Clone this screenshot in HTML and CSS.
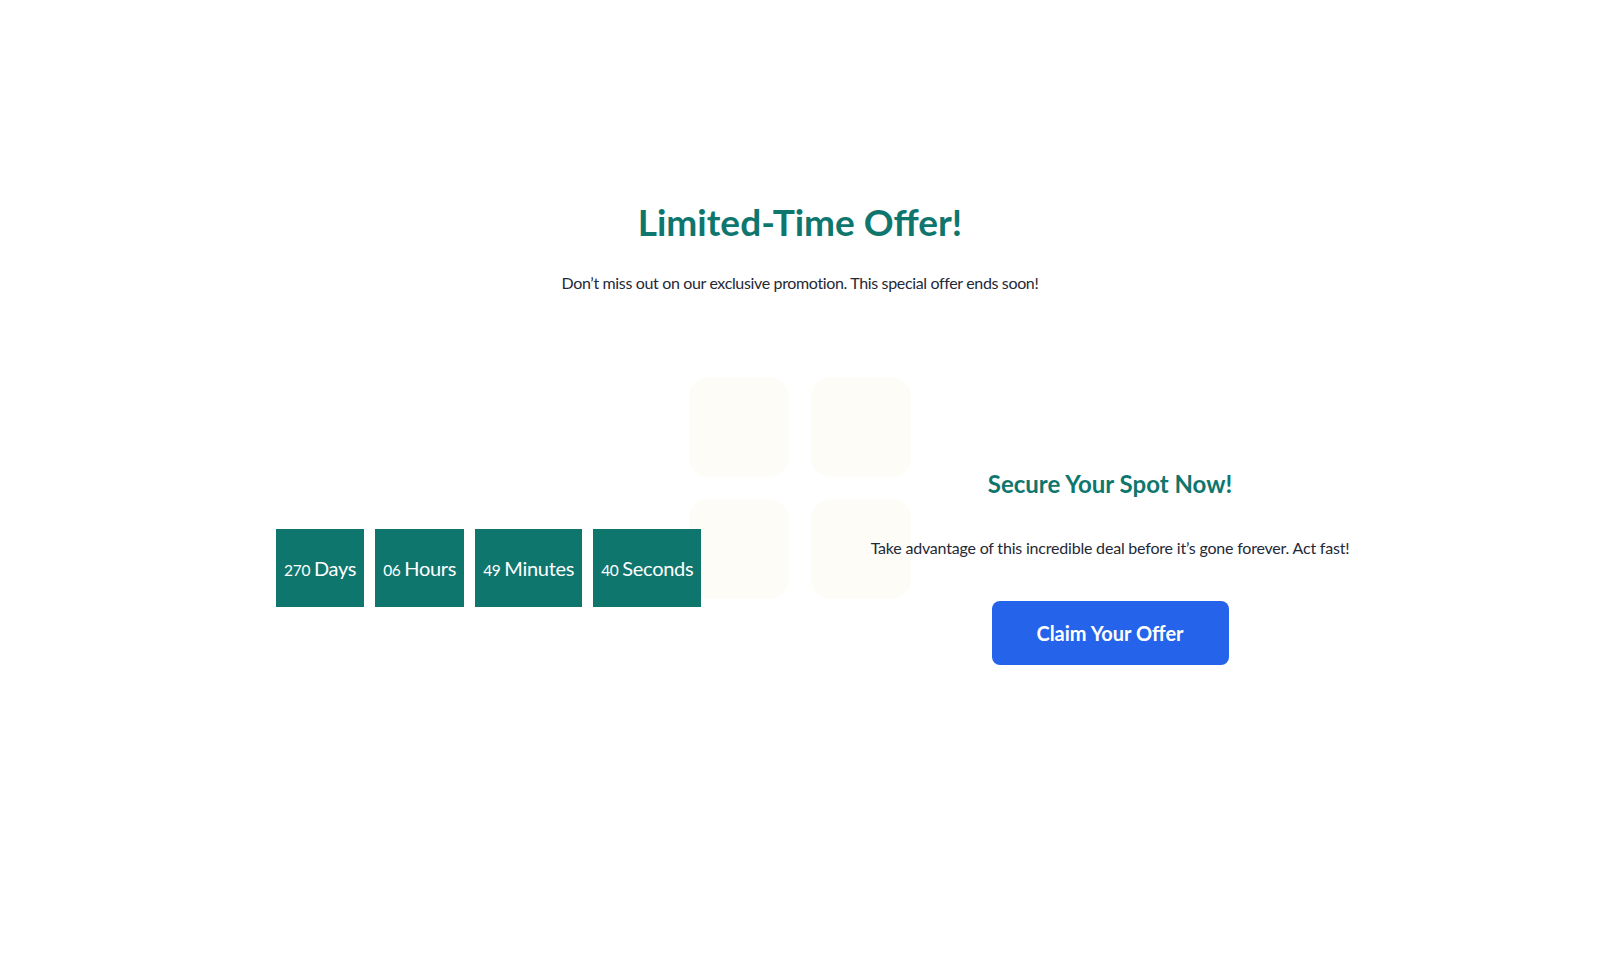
FILE: index.html
```html
<!DOCTYPE html>
<html lang="en">
<head>
<meta charset="utf-8">
<title>Limited-Time Offer</title>
<link rel="stylesheet" href="styles.css">
</head>
<body>
<main class="page">
  <header class="intro">
    <h1 class="intro-title">Limited-Time Offer!</h1>
    <p class="intro-text">Don’t miss out on our exclusive promotion. This special offer ends soon!</p>
  </header>
  <section class="offer">
    <div class="deco" aria-hidden="true">
      <span class="deco-tile"></span>
      <span class="deco-tile"></span>
      <span class="deco-tile"></span>
      <span class="deco-tile"></span>
    </div>
    <div class="offer-row">
      <div class="countdown">
        <div class="cd-box"><span class="cd-time"><span class="cd-num">270</span> <span class="cd-label">Days</span></span></div>
        <div class="cd-box"><span class="cd-time"><span class="cd-num">06</span> <span class="cd-label">Hours</span></span></div>
        <div class="cd-box"><span class="cd-time"><span class="cd-num">49</span> <span class="cd-label">Minutes</span></span></div>
        <div class="cd-box"><span class="cd-time"><span class="cd-num">40</span> <span class="cd-label">Seconds</span></span></div>
      </div>
      <div class="cta">
        <h2 class="cta-title">Secure Your Spot Now!</h2>
        <p class="cta-text">Take advantage of this incredible deal before it’s gone forever. Act fast!</p>
        <button class="cta-button" type="button">Claim Your Offer</button>
      </div>
    </div>
  </section>
</main>
</body>
</html>
```

FILE: styles.css
```css
* { box-sizing: border-box; }

html, body {
  margin: 0;
  padding: 0;
  background: #ffffff;
}

body {
  font-family: "Lato", "Noto Sans", sans-serif;
  color: #1f2937;
}

.page {
  padding-top: 200px;
}

.intro {
  text-align: center;
}

.intro-title {
  margin: 0;
  font-size: 37px;
  line-height: 1.2;
  font-weight: 700;
  color: #0f766e;
}

.intro-text {
  margin: 27px 0 0;
  font-size: 16px;
  line-height: 24px;
  letter-spacing: -0.35px;
  color: #1f2937;
}

.offer {
  position: relative;
  margin-top: 173px;
}

.deco {
  position: absolute;
  top: -91px;
  left: calc(50% - 111px);
  display: grid;
  grid-template-columns: 100px 100px;
  grid-auto-rows: 100px;
  gap: 22px;
  z-index: 0;
}

.deco-tile {
  display: block;
  background: #fdfcf6;
  border-radius: 20px;
}

.offer-row {
  position: relative;
  z-index: 1;
  display: grid;
  grid-template-columns: 556px 556px;
  align-items: center;
  margin-left: 276px;
}

.countdown {
  display: flex;
  gap: 11px;
  margin-top: 3px;
}

.cd-box {
  height: 78px;
  padding: 0 8px;
  display: flex;
  align-items: center;
  justify-content: center;
  background: #0f766e;
  color: #ffffff;
  white-space: nowrap;
  letter-spacing: -0.3px;
}

.cd-num {
  font-size: 15.5px;
}

.cd-label {
  font-size: 20px;
}

.cta {
  text-align: center;
}

.cta-title {
  margin: 0;
  font-size: 24px;
  line-height: 32px;
  font-weight: 700;
  color: #0f766e;
}

.cta-text {
  margin: 36px 0 0;
  font-size: 16px;
  line-height: 24px;
  letter-spacing: -0.2px;
  color: #1f2937;
}

.cta-button {
  margin-top: 41px;
  width: 237px;
  height: 64px;
  border: 0;
  border-radius: 8px;
  background: #2563eb;
  color: #ffffff;
  font-family: inherit;
  font-size: 20px;
  font-weight: 700;
  cursor: pointer;
}
```
